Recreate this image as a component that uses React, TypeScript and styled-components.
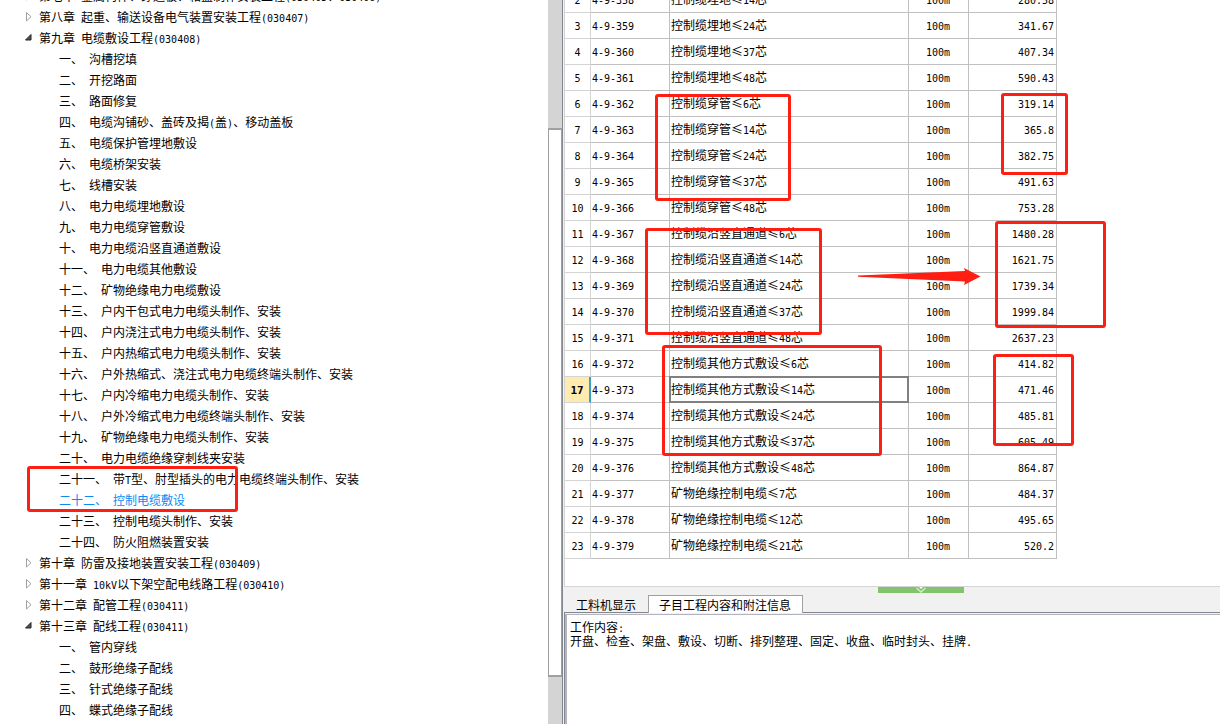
import React, { Fragment } from "react";
import styled, { createGlobalStyle, css } from "styled-components";

const cjk = `"Noto Sans CJK SC", "Noto Sans", sans-serif`;
const mono = `"DejaVu Sans Mono", "Liberation Mono", monospace`;
const grid = "#c0c0c0";
const red = "#ff1e12";

const GlobalStyle = createGlobalStyle`
  * { box-sizing: border-box; }
  body { margin: 0; background: #fff; color: #000; font: 12px/14px ${cjk}; }
  ul { list-style: none; margin: 0; padding: 0; }
  button { font: inherit; color: inherit; }
`;

const Page = styled.div`
  position: relative;
  display: grid;
  grid-template-columns: minmax(0, 548px) 14px minmax(0, 1fr);
  height: 100vh;
  overflow: hidden;
`;

const TreePane = styled.nav`
  overflow: hidden;
  padding-left: 24px;
`;

const Tree = styled.ul`
  && { margin-top: -15px; }
`;

const TreeRow = styled.li`
  display: flex;
  align-items: center;
  height: 21px;
  white-space: pre;
`;

const Toggle = styled.button`
  display: flex;
  width: 15px;
  height: 12px;
  padding: 0;
  border: 0;
  background: none;
`;

const TreeLink = styled.a<{ $child?: boolean; $active?: boolean }>`
  margin-left: ${(p) => (p.$child ? 35 : 0)}px;
  color: ${(p) => (p.$active ? "#0a8cf5" : "#000")};
  text-decoration: none;
`;

const Latin = styled.span`
  font-family: ${mono};
  font-size: 10px;
  line-height: 0;
`;

const ScrollTrack = styled.div`
  display: flex;
  flex-direction: column;
  background: #d4d4d4;
  padding-top: 128px;
`;

const ScrollThumb = styled.div`
  height: 549px;
  background: #fff;
  border: 1px solid #a0a0a0;
  border-width: 2px 1px;
`;

const Main = styled.main`
  display: flex;
  flex-direction: column;
  min-width: 0;
  border-left: 1px solid #828790;
  background: #f1f1f1;
`;

const GridPane = styled.section`
  height: 587px;
  flex: none;
  overflow: hidden;
  margin-left: 1px;
  background: #fff;
  border-left: 1px solid #d4d4d4;
  border-bottom: 1px solid #d4d4d4;
`;

const Table = styled.table`
  width: 492px;
  margin-top: -13px;
  table-layout: fixed;
  border-collapse: separate;
  border-spacing: 0;
`;

const Cell = styled.td<{ $align?: string; $selected?: boolean }>`
  position: relative;
  height: 26px;
  padding: 0 2px 2px 1px;
  border-right: 1px solid ${grid};
  border-bottom: 1px solid ${grid};
  text-align: ${(p) => p.$align ?? "left"};
  white-space: nowrap;
  ${(p) =>
    p.$selected &&
    css`
      &::after {
        content: "";
        position: absolute;
        inset: -1px;
        border: 2px solid #808080;
      }
    `}
`;

const RowHead = styled.th<{ $current?: boolean }>`
  height: 26px;
  padding: 0 0 2px;
  border-right: 1px solid #d4d4d4;
  border-bottom: 1px solid #d4d4d4;
  font-weight: ${(p) => (p.$current ? 700 : 400)};
  ${(p) =>
    p.$current &&
    css`
      background: #ffebb0;
      border-right: 2px solid #38a0c8;
      ${Latin} { font-size: 11px; }
    `}
`;

const Splitter = styled.div`
  display: flex;
  justify-content: center;
  height: 8px;
`;

const SplitterGrip = styled.button`
  display: flex;
  justify-content: center;
  width: 86px;
  height: 6px;
  margin-left: 58px;
  padding: 0;
  border: 0;
  background: #82c46c;
`;

const Tabs = styled.div`
  display: flex;
  align-items: flex-end;
  height: 17px;
  padding-left: 2px;
`;

const Tab = styled.button<{ $active?: boolean }>`
  height: ${(p) => (p.$active ? 18 : 16)}px;
  padding: 0 11px 0 10px;
  border: 1px solid transparent;
  border-bottom: 0;
  background: none;
  line-height: 14px;
  ${(p) =>
    p.$active &&
    css`
      position: relative;
      margin-bottom: -1px;
      border-color: #a0a0a0;
      background: #fff;
    `}
`;

const Notes = styled.section`
  flex: 1;
  margin-left: 1px;
  padding: 7px 5px;
  border-top: 1px solid #828790;
  border-left: 1px solid #828790;
  background: #fff;
  box-shadow: inset 0 1px 0 #f1f1f1, inset 2px 2px 0 #b4b4be;
  p { margin: 0; }
`;

const Mark = styled.div<{ $x: number; $y: number; $w: number; $h: number }>`
  position: absolute;
  left: ${(p) => p.$x}px;
  top: ${(p) => p.$y}px;
  width: ${(p) => p.$w}px;
  height: ${(p) => p.$h}px;
  border: 3px solid ${red};
  border-radius: 3px;
  pointer-events: none;
`;

const Arrow = styled.svg`
  position: absolute;
  left: 858px;
  top: 268px;
  pointer-events: none;
`;

/* Half-width characters take half the advance of a full-width one. */
const Mixed = ({ text }: { text: string }) => (
  <>
    {text.split(/([\x20-\x7e]+)/).map((part, i) =>
      i % 2 ? <Latin key={i}>{part}</Latin> : <Fragment key={i}>{part}</Fragment>
    )}
  </>
);

type Chapter = { title: string; open?: boolean; items?: string[] };

const chapters: Chapter[] = [
  { title: "第七章 金属构件、穿通板、箱盒制作安装工程(030405、030406)" },
  { title: "第八章 起重、输送设备电气装置安装工程(030407)" },
  {
    title: "第九章 电缆敷设工程(030408)",
    open: true,
    items: [
      "一、 沟槽挖填",
      "二、 开挖路面",
      "三、 路面修复",
      "四、 电缆沟铺砂、盖砖及揭(盖)、移动盖板",
      "五、 电缆保护管埋地敷设",
      "六、 电缆桥架安装",
      "七、 线槽安装",
      "八、 电力电缆埋地敷设",
      "九、 电力电缆穿管敷设",
      "十、 电力电缆沿竖直通道敷设",
      "十一、 电力电缆其他敷设",
      "十二、 矿物绝缘电力电缆敷设",
      "十三、 户内干包式电力电缆头制作、安装",
      "十四、 户内浇注式电力电缆头制作、安装",
      "十五、 户内热缩式电力电缆头制作、安装",
      "十六、 户外热缩式、浇注式电力电缆终端头制作、安装",
      "十七、 户内冷缩电力电缆头制作、安装",
      "十八、 户外冷缩式电力电缆终端头制作、安装",
      "十九、 矿物绝缘电力电缆头制作、安装",
      "二十、 电力电缆绝缘穿刺线夹安装",
      "二十一、 带T型、肘型插头的电力电缆终端头制作、安装",
      "二十二、 控制电缆敷设",
      "二十三、 控制电缆头制作、安装",
      "二十四、 防火阻燃装置安装",
    ],
  },
  { title: "第十章 防雷及接地装置安装工程(030409)" },
  { title: "第十一章 10kV以下架空配电线路工程(030410)" },
  { title: "第十二章 配管工程(030411)" },
  {
    title: "第十三章 配线工程(030411)",
    open: true,
    items: ["一、 管内穿线", "二、 鼓形绝缘子配线", "三、 针式绝缘子配线", "四、 蝶式绝缘子配线"],
  },
];

const activeItem = "二十二、 控制电缆敷设";
const currentRow = 17;

const rows: [string, string][] = [
  ["控制缆埋地≤14芯", "280.58"],
  ["控制缆埋地≤24芯", "341.67"],
  ["控制缆埋地≤37芯", "407.34"],
  ["控制缆埋地≤48芯", "590.43"],
  ["控制缆穿管≤6芯", "319.14"],
  ["控制缆穿管≤14芯", "365.8"],
  ["控制缆穿管≤24芯", "382.75"],
  ["控制缆穿管≤37芯", "491.63"],
  ["控制缆穿管≤48芯", "753.28"],
  ["控制缆沿竖直通道≤6芯", "1480.28"],
  ["控制缆沿竖直通道≤14芯", "1621.75"],
  ["控制缆沿竖直通道≤24芯", "1739.34"],
  ["控制缆沿竖直通道≤37芯", "1999.84"],
  ["控制缆沿竖直通道≤48芯", "2637.23"],
  ["控制缆其他方式敷设≤6芯", "414.82"],
  ["控制缆其他方式敷设≤14芯", "471.46"],
  ["控制缆其他方式敷设≤24芯", "485.81"],
  ["控制缆其他方式敷设≤37芯", "605.49"],
  ["控制缆其他方式敷设≤48芯", "864.87"],
  ["矿物绝缘控制电缆≤7芯", "484.37"],
  ["矿物绝缘控制电缆≤12芯", "495.65"],
  ["矿物绝缘控制电缆≤21芯", "520.2"],
];

const marks = [
  [27, 466, 211, 46],
  [655, 94, 136, 107],
  [645, 228, 177, 107],
  [662, 345, 220, 111],
  [1001, 93, 67, 82],
  [995, 221, 111, 107],
  [993, 354, 81, 92],
];

const ToggleIcon = ({ open }: { open?: boolean }) => (
  <svg width="9" height="12" viewBox="0 0 9 12" aria-hidden="true">
    {open ? (
      <path d="M7 2.500v5.500H1.500z" fill="#505050" stroke="#262626" strokeLinejoin="round" />
    ) : (
      <path d="M2.500 1.500v8.500l4.500-4.250z" fill="#fff" stroke="#a0a0a0" />
    )}
  </svg>
);

export default function App() {
  return (
    <Page>
      <GlobalStyle />
      <TreePane aria-label="章节">
        <Tree>
          {chapters.map((c) => (
            <Fragment key={c.title}>
              <TreeRow>
                <Toggle aria-label={c.title} aria-expanded={!!c.open}>
                  <ToggleIcon open={c.open} />
                </Toggle>
                <TreeLink href="#"><Mixed text={c.title} /></TreeLink>
              </TreeRow>
              {c.items?.map((item) => (
                <TreeRow key={item}>
                  <TreeLink href="#" $child $active={item === activeItem}>
                    <Mixed text={item} />
                  </TreeLink>
                </TreeRow>
              ))}
            </Fragment>
          ))}
        </Tree>
      </TreePane>
      <ScrollTrack><ScrollThumb /></ScrollTrack>
      <Main>
        <GridPane>
          <Table>
            <colgroup>
              <col style={{ width: 26 }} />
              <col style={{ width: 79 }} />
              <col style={{ width: 239 }} />
              <col style={{ width: 60 }} />
              <col style={{ width: 88 }} />
            </colgroup>
            <tbody>
              {rows.map(([name, price], i) => {
                const n = i + 2;
                return (
                  <tr key={n}>
                    <RowHead scope="row" $current={n === currentRow}><Latin>{n}</Latin></RowHead>
                    <Cell><Latin>{`4-9-${356 + n}`}</Latin></Cell>
                    <Cell $selected={n === currentRow}><Mixed text={name} /></Cell>
                    <Cell $align="center"><Latin>100m</Latin></Cell>
                    <Cell $align="right"><Latin>{price}</Latin></Cell>
                  </tr>
                );
              })}
            </tbody>
          </Table>
        </GridPane>
        <Splitter>
          <SplitterGrip aria-label="折叠">
            <svg width="10" height="6" viewBox="0 0 10 6" aria-hidden="true">
              <path d="M3 0h4L5 2z" fill="#fff" />
              <path d="M0.500 1l4.500 4 4.500-4" fill="none" stroke="#d2ebc8" strokeWidth="1.500" />
            </svg>
          </SplitterGrip>
        </Splitter>
        <Tabs role="tablist">
          <Tab role="tab" aria-selected={false}>工料机显示</Tab>
          <Tab role="tab" aria-selected $active>子目工程内容和附注信息</Tab>
        </Tabs>
        <Notes>
          <p><Mixed text="工作内容:" /></p>
          <p><Mixed text="开盘、检查、架盘、敷设、切断、排列整理、固定、收盘、临时封头、挂牌." /></p>
        </Notes>
      </Main>
      {marks.map(([x, y, w, h]) => (
        <Mark key={`${x}-${y}`} $x={x} $y={y} $w={w} $h={h} />
      ))}
      <Arrow width="123" height="18" viewBox="0 0 123 18" aria-hidden="true">
        <path d="M0 7.500L107 3L106 0L122.500 8.500L106 17L107 13.500L0 8.800z" fill={red} />
      </Arrow>
    </Page>
  );
}
